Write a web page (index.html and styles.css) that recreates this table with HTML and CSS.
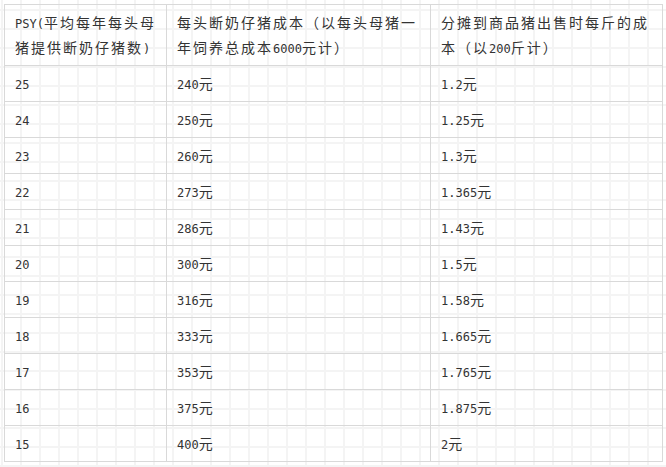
FILE: index.html
```html
<!DOCTYPE html>
<html lang="zh-CN">
<head>
<meta charset="utf-8">
<title>PSY 成本表</title>
<link rel="stylesheet" href="styles.css">
</head>
<body>
<table class="cost-table">
  <colgroup>
    <col class="c1">
    <col class="c2">
    <col class="c3">
  </colgroup>
  <thead>
    <tr>
      <th><span class="n">PSY(</span>平均每年每头母<br>猪提供断奶仔猪数<span class="n">)</span></th>
      <th>每头断奶仔猪成本（以每头母猪一<br>年饲养总成本<span class="n">6000</span>元计）</th>
      <th>分摊到商品猪出售时每斤的成<br>本（以<span class="n">200</span>斤计）</th>
    </tr>
  </thead>
  <tbody>
    <tr><td><span class="n">25</span></td><td><span class="n">240</span>元</td><td><span class="n">1.2</span>元</td></tr>
    <tr><td><span class="n">24</span></td><td><span class="n">250</span>元</td><td><span class="n">1.25</span>元</td></tr>
    <tr><td><span class="n">23</span></td><td><span class="n">260</span>元</td><td><span class="n">1.3</span>元</td></tr>
    <tr><td><span class="n">22</span></td><td><span class="n">273</span>元</td><td><span class="n">1.365</span>元</td></tr>
    <tr><td><span class="n">21</span></td><td><span class="n">286</span>元</td><td><span class="n">1.43</span>元</td></tr>
    <tr><td><span class="n">20</span></td><td><span class="n">300</span>元</td><td><span class="n">1.5</span>元</td></tr>
    <tr><td><span class="n">19</span></td><td><span class="n">316</span>元</td><td><span class="n">1.58</span>元</td></tr>
    <tr><td><span class="n">18</span></td><td><span class="n">333</span>元</td><td><span class="n">1.665</span>元</td></tr>
    <tr><td><span class="n">17</span></td><td><span class="n">353</span>元</td><td><span class="n">1.765</span>元</td></tr>
    <tr><td><span class="n">16</span></td><td><span class="n">375</span>元</td><td><span class="n">1.875</span>元</td></tr>
    <tr><td><span class="n">15</span></td><td><span class="n">400</span>元</td><td><span class="n">2</span>元</td></tr>
  </tbody>
</table>
</body>
</html>
```
FILE: styles.css
```css
html, body {
  height: 100%;
}
body {
  margin: 0;
  padding: 4px;
  box-sizing: border-box;
  background-color: #ffffff;
  background-image:
    linear-gradient(to right, #f4f4f4 2px, transparent 2px),
    linear-gradient(to bottom, #f4f4f4 2px, transparent 2px);
  background-size: 19px 19px;
  background-position: 1px 9px;
  color: #333333;
  font-family: "Noto Sans CJK SC", "Noto Sans", sans-serif;
  font-size: 14px;
}
.cost-table {
  border-collapse: collapse;
  table-layout: fixed;
  width: 658px;
  border: 1px solid #d9d9d9;
}
.c1 { width: 162px; }
.c2 { width: 264px; }
.c3 { width: 232px; }
.cost-table th,
.cost-table td {
  border: 1px solid #d9d9d9;
  padding: 5px 10px;
  line-height: 25px;
  height: 25px;
  text-align: left;
  vertical-align: middle;
  font-weight: normal;
  letter-spacing: 2px;
  white-space: nowrap;
  background: transparent;
}
.n {
  font-family: "DejaVu Sans Mono", "Liberation Mono", monospace;
  font-size: 12px;
  line-height: 1;
  letter-spacing: 0;
}
```
